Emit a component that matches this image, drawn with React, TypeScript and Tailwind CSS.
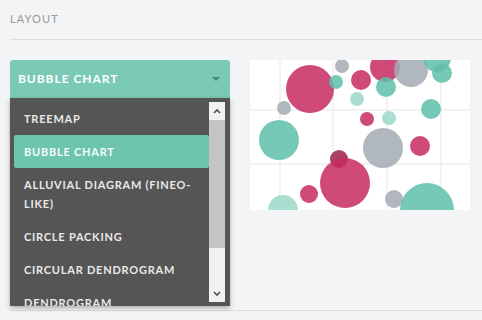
import React from "react";

// ── Layout picker: chart type dropdown + preview thumbnail ──

const LAYOUTS = [
  "Treemap",
  "Bubble chart",
  "Alluvial diagram (Fineo-like)",
  "Circle packing",
  "Circular dendrogram",
  "Dendrogram",
];

type Bubble = { x: number; y: number; r: number; c: string };

const RED = "#c72a62";
const TEAL = "#5fc0aa";
const LTEAL = "#9ad8c8";
const GRAY = "#a3aab3";

// coordinates relative to the 220x150 preview
const BUBBLES: Bubble[] = [
  { x: 60, y: 29, r: 24, c: RED },
  { x: 92, y: 6, r: 7, c: GRAY },
  { x: 86, y: 22, r: 7, c: TEAL },
  { x: 111, y: 20, r: 10, c: RED },
  { x: 135, y: 7, r: 15, c: RED },
  { x: 161, y: 10, r: 17, c: GRAY },
  { x: 136, y: 27, r: 10, c: TEAL },
  { x: 187, y: -2, r: 14, c: TEAL },
  { x: 192, y: 13, r: 10, c: TEAL },
  { x: 107, y: 39, r: 7, c: LTEAL },
  { x: 34, y: 48, r: 7, c: GRAY },
  { x: 181, y: 49, r: 10, c: TEAL },
  { x: 117, y: 59, r: 7, c: RED },
  { x: 139, y: 58, r: 7, c: LTEAL },
  { x: 29, y: 80, r: 20, c: TEAL },
  { x: 133, y: 88, r: 20, c: GRAY },
  { x: 170, y: 86, r: 10, c: RED },
  { x: 89, y: 99, r: 9, c: "#a01f4e" },
  { x: 95, y: 123, r: 25, c: RED },
  { x: 59, y: 134, r: 9, c: RED },
  { x: 144, y: 139, r: 9, c: GRAY },
  { x: 177, y: 150, r: 27, c: TEAL },
  { x: 33, y: 150, r: 15, c: LTEAL },
];

function Preview() {
  return (
    <svg width="220" height="150" viewBox="0 0 220 150" className="block bg-white">
      {[30, 83, 137, 191].map((x) => (
        <line key={x} x1={x} y1={0} x2={x} y2={150} stroke="#e3e6ea" strokeWidth="1" />
      ))}
      {[50, 104].map((y) => (
        <line key={y} x1={0} y1={y} x2={220} y2={y} stroke="#e3e6ea" strokeWidth="1" />
      ))}
      {BUBBLES.map((b, i) => (
        <circle key={i} cx={b.x} cy={b.y} r={b.r} fill={b.c} fillOpacity={0.85} />
      ))}
    </svg>
  );
}

function Scrollbar() {
  return (
    <div className="mt-1 mb-1 mr-[5px] flex w-4 flex-col bg-[#f1f1f1]">
      <div className="flex h-[18px] items-center justify-center">
        <svg width="8" height="6" viewBox="0 0 8 6">
          <path d="M1 5 L4 2 L7 5" fill="none" stroke="#505050" strokeWidth="1.6" />
        </svg>
      </div>
      <div className="h-[128px] bg-[#c4c4c4]" />
      <div className="flex-1" />
      <div className="flex h-[16px] items-center justify-center">
        <svg width="8" height="6" viewBox="0 0 8 6">
          <path d="M1 1 L4 4 L7 1" fill="none" stroke="#505050" strokeWidth="1.6" />
        </svg>
      </div>
    </div>
  );
}

export default function App() {
  const selected = "Bubble chart";
  return (
    <div className="h-[320px] w-[482px] overflow-hidden bg-[#f3f4f6] font-['Lato','Open_Sans',sans-serif]">
      <div className="pl-[10px]">
        <div className="border-b border-[#dcdee1] pt-[12px] pb-[13px] text-[11px] leading-[14px] tracking-[0.1em] text-[#999999] uppercase">
          Layout
        </div>

        <div className="relative flex h-[271px] gap-5 border-b border-[#dcdee1] pt-5">
          <div className="w-[220px]">
            <div className="flex h-[38px] items-center justify-between rounded-t-[3px] bg-[#7acab5] pr-[10px] pl-2">
              <span className="text-[12px] font-bold tracking-[0.08em] text-white uppercase">
                {selected}
              </span>
              <svg width="8" height="4" viewBox="0 0 8 4">
                <path d="M0 0 L8 0 L4 4 Z" fill="#3f8d7a" />
              </svg>
            </div>
          </div>
          <Preview />

          {/* open dropdown list */}
          <div className="absolute top-[58px] left-0 z-10 flex h-[208px] w-[220px] bg-[#555555] shadow-[0_2px_5px_rgba(0,0,0,0.3)]">
            <ul className="flex-1 overflow-hidden pt-1 pl-1">
              {LAYOUTS.map((l) => (
                <li
                  key={l}
                  className={`px-[10px] py-[7px] text-[11px] leading-[19px] font-bold tracking-[0.07em] uppercase ${
                    l === selected
                      ? "rounded-[2px] bg-[#6dc5ae] text-[#f4fbf9]"
                      : "text-[#e9e9e9]"
                  }`}
                >
                  {l}
                </li>
              ))}
            </ul>
            <Scrollbar />
          </div>
        </div>
      </div>
    </div>
  );
}
